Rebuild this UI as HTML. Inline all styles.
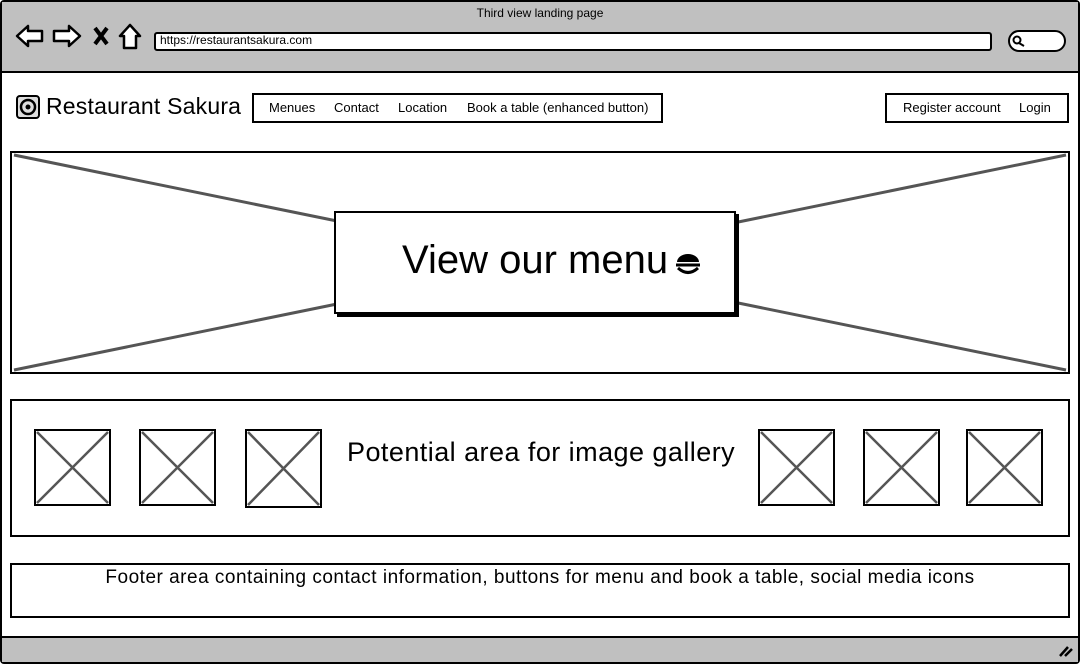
<!DOCTYPE html>
<html><head><style>
*{margin:0;padding:0;box-sizing:border-box}
body{width:1080px;height:664px;background:#fff;font-family:"Liberation Sans",sans-serif;position:relative;overflow:hidden}
.a{position:absolute}
.b{border:2px solid #000;background:#fff}
.t{font-size:13px;color:#000}
</style></head><body>
<div class="a" style="left:0;top:0;width:1080px;height:664px;border:2px solid #000;border-radius:4px"></div>
<div class="a" style="left:2px;top:2px;width:1076px;height:71px;background:#c0c0c0;border-bottom:2px solid #000"></div>
<div class="a t" style="left:0;top:6px;width:1080px;text-align:center;font-size:12px">Third view landing page</div>
<svg class="a" style="left:14px;top:22px" width="130" height="30" viewBox="0 0 130 30">
<path d="M3 14 L14 4 L14 9 L28 9 L28 19 L14 19 L14 24 Z" fill="#fff" stroke="#000" stroke-width="2.5" stroke-linejoin="round"/>
<path d="M66 14 L55 4 L55 9 L40 9 L40 19 L55 19 L55 24 Z" fill="#fff" stroke="#000" stroke-width="2.5" stroke-linejoin="round"/>
<path d="M81 6 L93 22 M93 6 L81 22" stroke="#000" stroke-width="4"/>
<path d="M116 3 L106 14 L110 14 L110 26 L122 26 L122 14 L126 14 Z" fill="#fff" stroke="#000" stroke-width="2.5" stroke-linejoin="round"/>
</svg>
<div class="a b" style="left:154px;top:32px;width:838px;height:19px;border-radius:3px"></div>
<div class="a t" style="left:160px;top:33px;font-size:12px">https://restaurantsakura.com</div>
<div class="a b" style="left:1008px;top:30px;width:58px;height:22px;border-radius:11px"></div>
<svg class="a" style="left:1012px;top:35px" width="14" height="12"><circle cx="5" cy="5" r="3.5" fill="none" stroke="#000" stroke-width="2"/><path d="M7 8 L12 11" stroke="#000" stroke-width="2"/></svg>
<svg class="a" style="left:16px;top:95px" width="24" height="24"><rect x="1" y="1" width="22" height="22" rx="3" fill="#ddd" stroke="#000" stroke-width="2"/><circle cx="12" cy="12" r="7" fill="none" stroke="#000" stroke-width="2.5"/><circle cx="12" cy="12" r="2.5" fill="#000"/></svg>
<div class="a" style="left:46px;top:93px;font-size:23px;letter-spacing:0.2px">Restaurant Sakura</div>
<div class="a b" style="left:252px;top:93px;width:411px;height:30px"></div>
<div class="a t" style="left:269px;top:100px">Menues</div>
<div class="a t" style="left:334px;top:100px">Contact</div>
<div class="a t" style="left:398px;top:100px">Location</div>
<div class="a t" style="left:467px;top:100px">Book a table (enhanced button)</div>
<div class="a b" style="left:885px;top:93px;width:184px;height:30px"></div>
<div class="a t" style="left:903px;top:100px">Register account</div>
<div class="a t" style="left:1019px;top:100px">Login</div>
<div class="a b" style="left:10px;top:151px;width:1060px;height:223px"></div>
<svg class="a" style="left:10px;top:151px" width="1060" height="223"><path d="M4 4 L1056 219 M1056 4 L4 219" stroke="#555" stroke-width="3"/></svg>
<div class="a b" style="left:334px;top:211px;width:402px;height:103px;box-shadow:3px 3px 0 #000"></div>
<div class="a" style="left:402px;top:238px;font-size:40px">View our menu</div>
<svg class="a" style="left:675px;top:253px" width="26" height="22"><path d="M2 9 A11 8 0 0 1 24 9 Z" fill="#000"/><path d="M1 12 L25 12 M3 15 Q13 24 23 15" stroke="#000" stroke-width="3" fill="none"/></svg>
<div class="a b" style="left:10px;top:399px;width:1060px;height:138px"></div>
<svg class="a" style="left:0;top:0" width="1080" height="664">
<g fill="#fff" stroke="#000" stroke-width="2">
<rect x="35" y="430" width="75" height="75"/><rect x="140" y="430" width="75" height="75"/><rect x="246" y="430" width="75" height="77"/>
<rect x="759" y="430" width="75" height="75"/><rect x="864" y="430" width="75" height="75"/><rect x="967" y="430" width="75" height="75"/></g>
<g stroke="#555" stroke-width="2.5">
<path d="M37 432 L108 503 M108 432 L37 503"/><path d="M142 432 L213 503 M213 432 L142 503"/><path d="M248 432 L319 505 M319 432 L248 505"/>
<path d="M761 432 L832 503 M832 432 L761 503"/><path d="M866 432 L937 503 M937 432 L866 503"/><path d="M969 432 L1040 503 M1040 432 L969 503"/></g>
</svg>
<div class="a" style="left:347px;top:437px;font-size:27px;letter-spacing:0.45px">Potential area for image gallery</div>
<div class="a b" style="left:10px;top:563px;width:1060px;height:55px"></div>
<div class="a" style="left:10px;top:567px;width:1060px;text-align:center;font-size:19px;letter-spacing:0.5px">Footer area containing contact information, buttons for menu and book a table, social media icons</div>
<div class="a" style="left:2px;top:636px;width:1076px;height:26px;background:#c0c0c0;border-top:2px solid #000"></div>
<svg class="a" style="left:1058px;top:644px" width="16" height="14"><path d="M2 12 L10 3 M7 12 L14 5" stroke="#000" stroke-width="2.5"/></svg>
</body></html>
